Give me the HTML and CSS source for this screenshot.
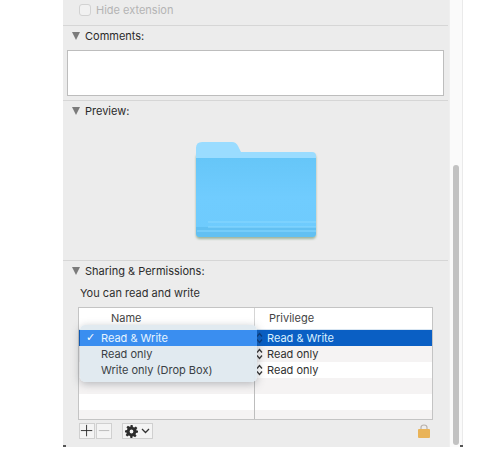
FILE: index.html
```html
<!DOCTYPE html>
<html lang="en">
<head>
    <meta charset="UTF-8">
    <meta name="viewport" content="width=device-width, initial-scale=1.0">
    <title>Folder Info</title>
    <link rel="stylesheet" href="styles.css">
</head>
<body>
    <div class="window">
        <div class="panel">
            <section class="section hide-row">
                <span class="checkbox"></span>
                <span class="hide-label">Hide extension</span>
            </section>

            <section class="section comments">
                <h2 class="heading"><span class="triangle"></span>Comments:</h2>
                <div class="textarea"></div>
            </section>

            <section class="section preview">
                <h2 class="heading"><span class="triangle"></span>Preview:</h2>
                <div class="preview-body">
                    <svg class="folder" width="124" height="102" viewBox="0 0 124 102">
                        <defs>
                            <linearGradient id="folderFront" x1="0" y1="0" x2="0" y2="1">
                                <stop offset="0" stop-color="#66c6f8"/>
                                <stop offset="0.5" stop-color="#70ccfe"/>
                                <stop offset="1" stop-color="#6ecbfd"/>
                            </linearGradient>
                            <filter id="soft" color-interpolation-filters="sRGB"><feGaussianBlur stdDeviation="0.6"/></filter>
                            <filter id="shade" color-interpolation-filters="sRGB"><feGaussianBlur stdDeviation="1.3"/></filter>
                        </defs>
                        <rect x="2" y="14" width="120" height="85" rx="4" fill="#9db59f" filter="url(#shade)"/>
                        <g filter="url(#soft)">
                            <path d="M2 8 Q2 2 8 2 L38 2 Q42 2 44 6 L47 12 L118 12 Q122 12 122 16 L122 22 L2 22 Z" fill="#9adcff"/>
                            <path d="M2 18 L122 18 L122 93 Q122 97 118 97 L6 97 Q2 97 2 93 Z" fill="url(#folderFront)"/>
                            <path d="M2 87 L122 87 L122 93 Q122 97 118 97 L6 97 Q2 97 2 93 Z" fill="#62c0f2"/>
                            <path d="M14 82 H122 M14 87 H122 M3 91 H122" stroke="#8ad8ff" stroke-width="1" fill="none"/>
                        </g>
                    </svg>
                </div>
            </section>

            <section class="section sharing">
                <h2 class="heading"><span class="triangle"></span>Sharing &amp; Permissions:</h2>
                <p class="sharing-note">You can read and write</p>
                <div class="table">
                    <div class="table-head">
                        <div class="col-name">Name</div>
                        <div class="col-priv">Privilege</div>
                    </div>
                    <div class="table-row selected">
                        <div class="col-name"></div>
                        <div class="col-priv">
                            <svg class="stepper" width="7" height="12" viewBox="0 0 7 12"><path d="M1 4.500L3.500 1.500L6 4.500M1 7.500L3.500 10.500L6 7.500" stroke="#0a3a7c" stroke-width="1.300" fill="none"/></svg>
                            Read &amp; Write
                        </div>
                    </div>
                    <div class="table-row tint">
                        <div class="col-name"></div>
                        <div class="col-priv">
                            <svg class="stepper" width="7" height="12" viewBox="0 0 7 12"><path d="M1 4.500L3.500 1.500L6 4.500M1 7.500L3.500 10.500L6 7.500" stroke="#333" stroke-width="1.300" fill="none"/></svg>
                            Read only
                        </div>
                    </div>
                    <div class="table-row">
                        <div class="col-name"></div>
                        <div class="col-priv">
                            <svg class="stepper" width="7" height="12" viewBox="0 0 7 12"><path d="M1 4.500L3.500 1.500L6 4.500M1 7.500L3.500 10.500L6 7.500" stroke="#333" stroke-width="1.300" fill="none"/></svg>
                            Read only
                        </div>
                    </div>
                    <div class="table-row tint">
                        <div class="col-name"></div>
                        <div class="col-priv"></div>
                    </div>
                    <div class="table-row">
                        <div class="col-name"></div>
                        <div class="col-priv"></div>
                    </div>
                    <div class="table-row tint last">
                        <div class="col-name"></div>
                        <div class="col-priv"></div>
                    </div>
                    <ul class="menu">
                        <li class="menu-item active"><span class="check">&#10003;</span>Read &amp; Write</li>
                        <li class="menu-item">Read only</li>
                        <li class="menu-item">Write only (Drop Box)</li>
                    </ul>
                </div>
                <div class="toolbar">
                    <div class="btn-group">
                        <button class="tool-btn">
                            <svg width="16" height="16" viewBox="0 0 16 16"><path d="M7.500 1V14M1 7.500H14" stroke="#222" stroke-width="1" fill="none"/></svg>
                        </button>
                        <button class="tool-btn">
                            <svg width="16" height="16" viewBox="0 0 16 16"><path d="M2 7.500H14" stroke="#b5b5b5" stroke-width="1" fill="none"/></svg>
                        </button>
                    </div>
                    <button class="tool-btn gear-btn">
                        <svg width="13" height="13" viewBox="0 0 24 24"><path fill="#2c2c2c" fill-rule="evenodd" d="M10 0h4l.7 3.600 2.300 1 3-2 2.800 2.800-2 3 1 2.300L24 10v4l-3.600.7-1 2.300 2 3-2.800 2.800-3-2-2.300 1L14 24h-4l-.7-3.600-2.300-1-3 2L1.200 18.600l2-3-1-2.300L0 14v-4l3.600-.7 1-2.300-2-3L5.400 1.200l3 2 2.300-1zM12 8.500a3.500 3.500 0 1 0 0 7 3.500 3.500 0 0 0 0-7z"/></svg>
                        <svg width="9" height="6" viewBox="0 0 9 6"><path d="M1 1L4.500 4.500L8 1" stroke="#333" stroke-width="1.300" fill="none"/></svg>
                    </button>
                    <svg class="lock" width="14" height="15" viewBox="0 0 14 15">
                        <path d="M4 6V3.500Q4 1 7 1T10 3.500V6" stroke="#b9b2ad" stroke-width="1.200" fill="none"/>
                        <rect x="1" y="5" width="12" height="9" rx="1" fill="#e9b358"/>
                    </svg>
                </div>
            </section>
        </div>
        <div class="scrollbar"><div class="thumb"></div></div>
    </div>
</body>
</html>
```

FILE: styles.css
```css
* { box-sizing: border-box; }

body {
    margin: 0;
    background: #fff;
    font-family: "Inter", "Liberation Sans", sans-serif;
    font-size: 11px;
    color: #2f2f2f;
}

.window {
    position: relative;
    display: flex;
    width: 400px;
    height: 447px;
    margin-left: 63px;
}

/* little dark bits of the window corners */
.window::before,
.window::after {
    content: "";
    position: absolute;
    bottom: 0;
    width: 3px;
    height: 2px;
    background: #555;
}
.window::before { left: 0; }
.window::after { right: 0; }

.panel {
    width: 386px;
    background: #ececec;
}

.section {
    margin-right: 1px;
    border-bottom: 1px solid #d6d6d6;
}

.hide-row {
    display: flex;
    align-items: center;
    height: 26px;
    padding: 0 0 5px 16px;
}

.checkbox {
    width: 12px;
    height: 12px;
    background: #f1f1f1;
    border: 1px solid #d2d2d2;
    border-radius: 3px;
}

.hide-label {
    margin-left: 5px;
    color: #b4b4b4;
}

.heading {
    display: flex;
    align-items: center;
    height: 20px;
    margin: 0;
    font-size: 11px;
    font-weight: 400;
    color: #2a2a2a;
}

.triangle {
    width: 0;
    height: 0;
    margin: 0 5px 0 9px;
    border-left: 4.5px solid transparent;
    border-right: 4.5px solid transparent;
    border-top: 8px solid #7b7b7b;
}

.comments {
    height: 75px;
}

.textarea {
    width: 377px;
    height: 46px;
    margin: 4px 0 0 4px;
    background: #fff;
    border: 1px solid #bdbdbd;
}

.preview {
    height: 160px;
}

.preview-body {
    display: flex;
    justify-content: center;
}

.folder {
    margin: 19px 0 0 0;
}

.sharing {
    border-bottom: 0;
}

.sharing-note {
    margin: 2px 0 0 17px;
    line-height: 20px;
}

.table {
    position: relative;
    width: 355px;
    height: 113px;
    margin: 4px 0 0 15px;
    background: #fff;
    border: 1px solid #c4c4c4;
}

.table-head {
    display: flex;
    height: 22px;
    color: #444;
    line-height: 20px;
    border-bottom: 1px solid #d9e6f2;
}

.table-row {
    display: flex;
    height: 16px;
    line-height: 16px;
}

.table-row.last {
    height: 9px;
}

.col-name {
    width: 176px;
    flex: none;
    border-right: 1px solid #bdbdbd;
}

.table-head .col-name {
    padding-left: 32px;
    border-right: 1px solid #d5d5d5;
}

.col-priv {
    flex: 1;
    padding-left: 12px;
    position: relative;
}

.table-head .col-priv {
    padding-left: 14px;
}

.tint { background: #f5f3f3; }

.selected {
    background: #0a5fc4;
    color: #d8efff;
}

.stepper {
    position: absolute;
    left: 1px;
    top: 2px;
}

.menu {
    position: absolute;
    left: 1px;
    top: 17px;
    width: 177px;
    height: 57px;
    margin: 0;
    padding: 5px 0 0;
    list-style: none;
    background: rgba(224, 233, 240, 0.97);
    border-radius: 5px;
    box-shadow: 0 2px 8px rgba(60, 70, 80, 0.35);
    color: #3a3f45;
}

.menu-item {
    position: relative;
    height: 16px;
    padding-left: 21px;
    line-height: 16px;
}

.menu-item.active {
    background: #3a8ef0;
    color: #e6f4ff;
}

.check {
    position: absolute;
    left: 6px;
    font-family: "DejaVu Sans", sans-serif;
    font-size: 11px;
    font-weight: 700;
    color: #fff;
}

.toolbar {
    display: flex;
    align-items: center;
    height: 16px;
    margin: 3px 0 0 16px;
}

.btn-group {
    display: flex;
    gap: 1px;
}

.tool-btn {
    display: flex;
    align-items: center;
    justify-content: center;
    width: 16px;
    height: 16px;
    padding: 0;
    background: #f4f4f4;
    border: 1px solid #d0d0d0;
}

.gear-btn {
    gap: 3px;
    width: 31px;
    margin-left: 10px;
}

.lock {
    margin-left: auto;
    margin-right: 17px;
}

.scrollbar {
    flex: 1;
    padding: 165px 3px 2px 3px;
    background: #fafafa;
    border-left: 1px solid #efefef;
    border-right: 1px solid #eaeaea;
}

.thumb {
    height: 100%;
    background: #c2c2c2;
    border-radius: 4px;
}
```
